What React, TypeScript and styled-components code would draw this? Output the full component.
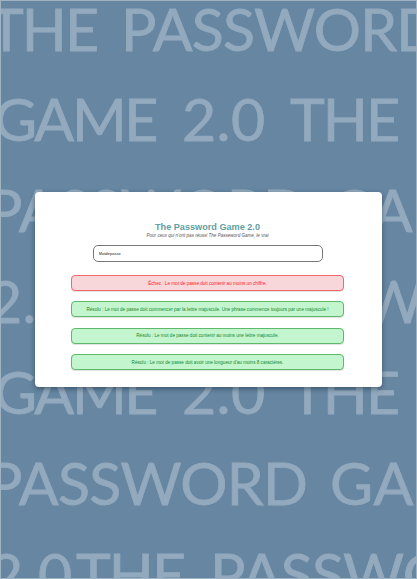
import React from "react";
import styled, { createGlobalStyle } from "styled-components";

const GlobalStyle = createGlobalStyle`
  * { box-sizing: border-box; }
  body { margin: 0; overflow: hidden; font-family: "Liberation Sans", Arial, sans-serif; }
`;

const Page = styled.main`
  position: relative;
  width: 417px;
  height: 579px;
  overflow: hidden;
  display: flex;
  justify-content: center;
  align-items: flex-start;
  padding-top: 192px;
  background: #6686a1;
`;

const Backdrop = styled.div`
  position: absolute;
  inset: 0;
  overflow: hidden;
  border: 1px solid #a0b3c3;
  color: #93a9bd;
  font: 400 59px/90.9px Lato, sans-serif;
  -webkit-text-stroke: 0.8px #93a9bd;
`;

const Line = styled.div<{ $shift: number }>`
  height: 90.9px;
  display: flex;
  white-space: pre;
  margin-left: ${(p) => p.$shift}px;
  &:first-child { margin-top: -17.5px; }
`;

const Word = styled.span<{ $width: number; $tracking?: number }>`
  flex: none;
  width: ${(p) => p.$width}px;
  letter-spacing: ${(p) => p.$tracking ?? 0}px;
  font-kerning: normal;
`;

const Card = styled.section`
  position: relative;
  width: 347px;
  height: 195px;
  display: flex;
  flex-direction: column;
  align-items: center;
  padding: 29px 2px 0 0;
  border-radius: 4px;
  background: #fff;
  box-shadow: 0 2px 5px rgba(20, 40, 60, 0.5);
`;

const Title = styled.h1`
  margin: 0;
  color: #5f9ea0;
  font-size: 9.15px;
  line-height: 12px;
  white-space: nowrap;
`;

const Subtitle = styled.p`
  margin: -0.5px 0 0;
  height: 12.5px;
  color: #555;
  font-size: 4.55px;
  font-style: italic;
  line-height: 5px;
  white-space: nowrap;
`;

const PasswordInput = styled.input`
  flex: none;
  width: 230px;
  height: 17px;
  margin-bottom: 13px;
  padding: 0 5px;
  border: 1px solid #777;
  border-radius: 5px;
  outline: none;
  background: #fff;
  color: #222;
  font: 4.1px "Liberation Sans", Arial, sans-serif;
`;

const Rules = styled.div`
  display: flex;
  flex-direction: column;
  gap: 10.3px;
`;

const Rule = styled.div<{ $failed?: boolean }>`
  width: 273px;
  height: 16px;
  display: flex;
  align-items: center;
  justify-content: center;
  padding-top: 0.6px;
  border: 1px solid ${(p) => (p.$failed ? "#f4686c" : "#5fb96a")};
  border-radius: 4px;
  background: ${(p) => (p.$failed ? "#f8d7da" : "#c3f5cf")};
  color: ${(p) => (p.$failed ? "#ff2028" : "#168a2a")};
  box-shadow: 0 1px 1px rgba(0, 0, 0, 0.12);
  font-size: 4.62px;
  white-space: nowrap;
`;

type WordSpec = [string, number, number?];
const lines: { shift: number; words: WordSpec[] }[] = [
  { shift: -12, words: [["THE", 132, -2], ["PASSWORD", 340, -0.8]] },
  { shift: -7, words: [["GAME", 188, -2.4], ["2.0", 108, 0.4], ["THE", 130, -2]] },
  { shift: -14, words: [["PASSWORD", 343, -0.7], ["GAME", 188]] },
  { shift: -13, words: [["2.0", 108, 0.4], ["THE", 134, -2], ["PASSWORD", 340, -0.8]] },
  { shift: -7, words: [["GAME", 188, -2.4], ["2.0", 108, 0.4], ["THE", 130, -2]] },
  { shift: -14, words: [["PASSWORD", 343, -0.7], ["GAME", 188, 0.8]] },
  { shift: -12, words: [["2.0", 87, 0.4], ["THE", 134, -2], ["PASSWORD", 340, -0.8]] },
];

export default function App() {
  return (
    <Page>
      <GlobalStyle />
      <Backdrop aria-hidden>
        {lines.map((line, i) => (
          <Line key={i} $shift={line.shift}>
            {line.words.map(([text, width, tracking], j) => (
              <Word key={j} $width={width} $tracking={tracking}>{text}</Word>
            ))}
          </Line>
        ))}
      </Backdrop>
      <Card>
        <Title>The Password Game 2.0</Title>
        <Subtitle>Pour ceux qui n'ont pas réussi The Passeword Game, le vrai</Subtitle>
        <PasswordInput defaultValue="Motdepasse" aria-label="Mot de passe" />
        <Rules>
          <Rule $failed>Échec : Le mot de passe doit contenir au moins un chiffre.</Rule>
          <Rule>Résolu : Le mot de passe doit commencer par la lettre majuscule. Une phrase commence toujours par une majuscule !</Rule>
          <Rule>Résolu : Le mot de passe doit contenir au moins une lettre majuscule.</Rule>
          <Rule>Résolu : Le mot de passe doit avoir une longueur d'au moins 8 caractères.</Rule>
        </Rules>
      </Card>
    </Page>
  );
}
